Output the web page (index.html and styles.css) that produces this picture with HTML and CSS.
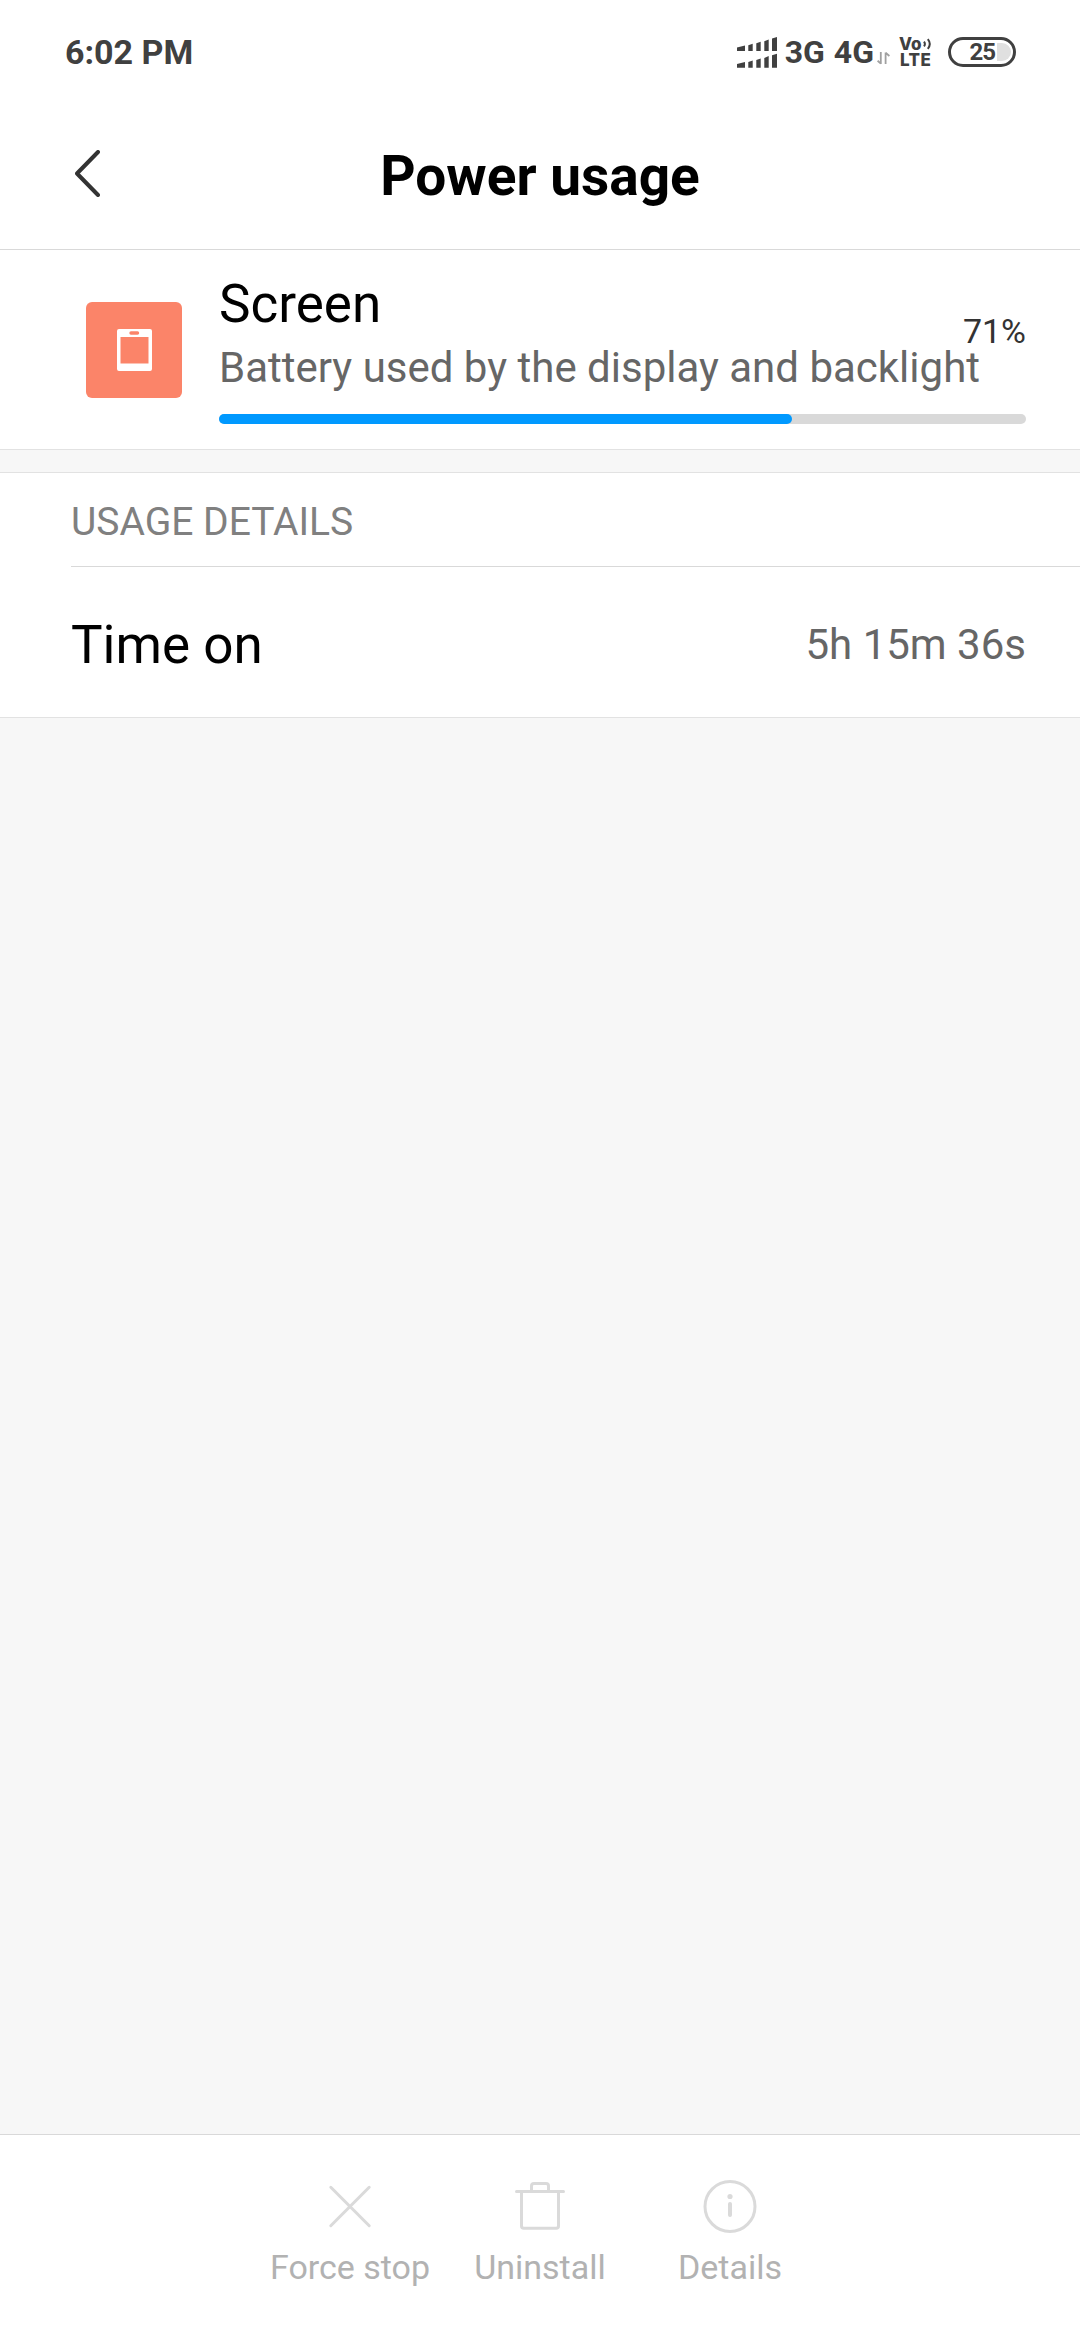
FILE: index.html
```html
<!DOCTYPE html>
<html lang="en">
<head>
  <meta charset="UTF-8">
  <meta name="viewport" content="width=device-width, initial-scale=1.0">
  <title>Power usage</title>
  <link rel="stylesheet" href="styles.css">
</head>
<body>
  <div class="status-bar">
    <div class="clock">6:02 PM</div>
    <div class="status-icons">
      <svg class="signal" width="40" height="31" viewBox="0 0 40 31">
        <path d="M0 10.4L8 8.4V14H0zM11.3 8.2L15.7 6.8V14H11.3zM19.3 6.2L23.7 4.8V14H19.3zM27.3 4.2L31.7 2.4V14H27.3zM35 1.6L40 0V14H35z"/>
        <path d="M0 27.1L8 25.1V30.7H0zM11.3 24.9L15.7 23.5V30.7H11.3zM19.3 22.9L23.7 21.5V30.7H19.3zM27.3 20.9L31.7 19.1V30.7H27.3zM35 18.3L40 16.7V30.7H35z"/>
      </svg>
      <span class="network network-3g">3G</span>
      <span class="network network-4g">4G</span>
      <svg class="data-arrows" width="14" height="13" viewBox="0 0 14 13">
        <path d="M3.8 0V12M0.6 8.8L3.8 11.6M8.6 12V0.6M8.6 0.8L12.4 4"/>
      </svg>
      <div class="volte">
        <div class="volte-row">Vo<svg class="waves" width="9" height="12" viewBox="0 0 9 12">
          <path d="M1 3.6Q2.8 6 1 8.4M4.8 1.2Q8.8 6 4.8 10.8"/>
        </svg></div>
        <div class="volte-row volte-lte">LTE</div>
      </div>
      <div class="battery"><span>25</span><i class="battery-rest"></i></div>
    </div>
  </div>

  <div class="title-bar">
    <svg class="back" width="25" height="47" viewBox="0 0 25 47">
      <path d="M23 2L2 23.5L23 45"/>
    </svg>
    <h1>Power usage</h1>
  </div>

  <div class="app-card">
    <div class="app-icon">
      <svg width="35" height="42" viewBox="0 0 35 42">
        <path fill-rule="evenodd" d="M2 0H33Q35 0 35 2V40Q35 42 33 42H2Q0 42 0 40V2Q0 0 2 0zM3.5 8V34.5H31.5V8zM14 2.3Q12.3 2.3 12.3 4T14 5.7H20.5Q22.2 5.7 22.2 4T20.5 2.3z"/>
      </svg>
    </div>
    <div class="app-info">
      <div class="app-head">
        <div class="app-name">Screen</div>
        <div class="app-percent">71%</div>
      </div>
      <div class="app-desc">Battery used by the display and backlight</div>
      <div class="progress"><div class="progress-fill" style="width: 71%"></div></div>
    </div>
  </div>

  <div class="details-card">
    <div class="section-title">USAGE DETAILS</div>
    <div class="detail-row">
      <div class="detail-label">Time on</div>
      <div class="detail-value">5h 15m 36s</div>
    </div>
  </div>

  <div class="action-bar">
    <div class="action">
      <svg width="56" height="56" viewBox="0 0 56 56">
        <path d="M8.8 9.3L47.2 47.7M47.2 9.3L8.8 47.7"/>
      </svg>
      <div class="action-label">Force stop</div>
    </div>
    <div class="action">
      <svg width="56" height="56" viewBox="0 0 56 56">
        <path d="M4.5 13.5H51.5M9.5 13.5V48Q9.5 50.3 11.8 50.3H44.2Q46.5 50.3 46.5 48V13.5M19.5 13.5V8Q19.5 5.5 22 5.5H34Q36.5 5.5 36.5 8V13.5"/>
      </svg>
      <div class="action-label">Uninstall</div>
    </div>
    <div class="action">
      <svg width="56" height="56" viewBox="0 0 56 56">
        <circle cx="28" cy="28.5" r="25"/>
        <path class="info-stem" d="M28 26V37"/>
        <circle class="info-dot" cx="28" cy="18.5" r="2.6"/>
      </svg>
      <div class="action-label">Details</div>
    </div>
  </div>
</body>
</html>
```

FILE: styles.css
```css
body {
  margin: 0;
  min-height: 2340px;
  display: flex;
  flex-direction: column;
  background-color: #f7f7f7;
  color: #000;
  font-family: Roboto, sans-serif;
}
svg {
  display: block;
  flex: none;
}

/* status bar */
.status-bar {
  height: 104px;
  padding: 0 64px 0 65px;
  display: flex;
  justify-content: space-between;
  align-items: center;
  background-color: #fff;
  color: #404040;
}
.clock {
  font-size: 34px;
  font-weight: bold;
  line-height: 40px;
}
.status-icons {
  display: flex;
  align-items: center;
}
.signal {
  fill: #404040;
}
.network {
  font-size: 32px;
  font-weight: bold;
  line-height: 40px;
}
.network-3g {
  margin-left: 8px;
}
.network-4g {
  margin-left: 9px;
}
.data-arrows {
  margin: 12px 0 0 3px;
  fill: none;
  stroke: #a0a0a0;
  stroke-width: 1.8;
}
.volte {
  margin-left: 8px;
  width: 34px;
  font-family: Inter, sans-serif;
  font-size: 17px;
  font-weight: 800;
}
.volte-row {
  display: flex;
  align-items: center;
  height: 16px;
  line-height: 16px;
}
.volte-lte {
  padding-left: 1px;
  letter-spacing: 0.4px;
}
.waves {
  margin-left: 1px;
  fill: none;
  stroke: #404040;
  stroke-width: 2;
}
.battery {
  box-sizing: border-box;
  width: 68px;
  height: 30px;
  margin-left: 15px;
  padding-right: 2px;
  border: 3px solid #404040;
  border-radius: 15px;
  display: flex;
  align-items: center;
  justify-content: flex-end;
  font-size: 24px;
  font-weight: bold;
  line-height: 24px;
  letter-spacing: -1px;
}
.battery-rest {
  width: 14px;
  height: 18px;
  margin-left: 2px;
  border-radius: 0 9px 9px 0;
  background-color: #e0e0e0;
}

/* title bar */
.title-bar {
  height: 145px;
  padding: 0 75px;
  display: grid;
  grid-template-columns: 25px 1fr 25px;
  align-items: center;
  background-color: #fff;
  border-bottom: 1px solid #d9d9d9;
}
.title-bar h1 {
  margin: 0 0 2px;
  font-size: 55px;
  font-weight: bold;
  line-height: 64px;
  text-align: center;
}
.back {
  margin-bottom: 7px;
  fill: none;
  stroke: #333;
  stroke-width: 4;
  stroke-linecap: round;
  stroke-linejoin: round;
}

/* app summary */
.app-card {
  height: 199px;
  padding: 0 54px 0 86px;
  display: flex;
  background-color: #fff;
  border-bottom: 1px solid #e2e2e2;
}
.app-icon {
  width: 96px;
  height: 96px;
  margin-top: 52px;
  border-radius: 6px;
  display: flex;
  align-items: center;
  justify-content: center;
  background-color: #fb8469;
}
.app-icon svg {
  fill: #fff;
}
.app-info {
  flex: 1;
  margin-left: 37px;
  padding-top: 23px;
}
.app-head {
  height: 70px;
  display: flex;
  justify-content: space-between;
}
.app-name {
  font-size: 53px;
  line-height: 62px;
}
.app-percent {
  align-self: flex-end;
  font-size: 34px;
  line-height: 24px;
  color: #333;
}
.app-desc {
  font-size: 42px;
  line-height: 50px;
  color: #666;
  white-space: nowrap;
}
.progress {
  height: 10px;
  margin-top: 21px;
  border-radius: 5px;
  background-color: #d9d9d9;
}
.progress-fill {
  height: 10px;
  border-radius: 5px;
  background-color: #0099ff;
}

/* usage details */
.details-card {
  margin-top: 22px;
  padding-left: 71px;
  background-color: #fff;
  border-top: 1px solid #e2e2e2;
  border-bottom: 1px solid #e2e2e2;
}
.section-title {
  height: 93px;
  line-height: 99px;
  font-size: 39px;
  color: #808080;
  border-bottom: 1px solid #d9d9d9;
}
.detail-row {
  height: 144px;
  padding: 6px 54px 0 0;
  display: flex;
  justify-content: space-between;
  align-items: center;
}
.detail-label {
  font-size: 53px;
  line-height: 62px;
}
.detail-value {
  font-size: 42px;
  line-height: 50px;
  color: #666;
}

/* bottom actions */
.action-bar {
  height: 162px;
  margin-top: auto;
  padding-top: 43px;
  display: flex;
  justify-content: center;
  background-color: #fff;
  border-top: 1px solid #d9d9d9;
}
.action {
  width: 190px;
  display: flex;
  flex-direction: column;
  align-items: center;
}
.action svg {
  fill: none;
  stroke: #dadada;
  stroke-width: 3;
  stroke-linecap: round;
}
.action .info-stem {
  stroke-width: 4;
}
.action .info-dot {
  fill: #dadada;
  stroke: none;
}
.action-label {
  margin-top: 13px;
  font-size: 34px;
  line-height: 40px;
  color: #b2b2b2;
}
```
